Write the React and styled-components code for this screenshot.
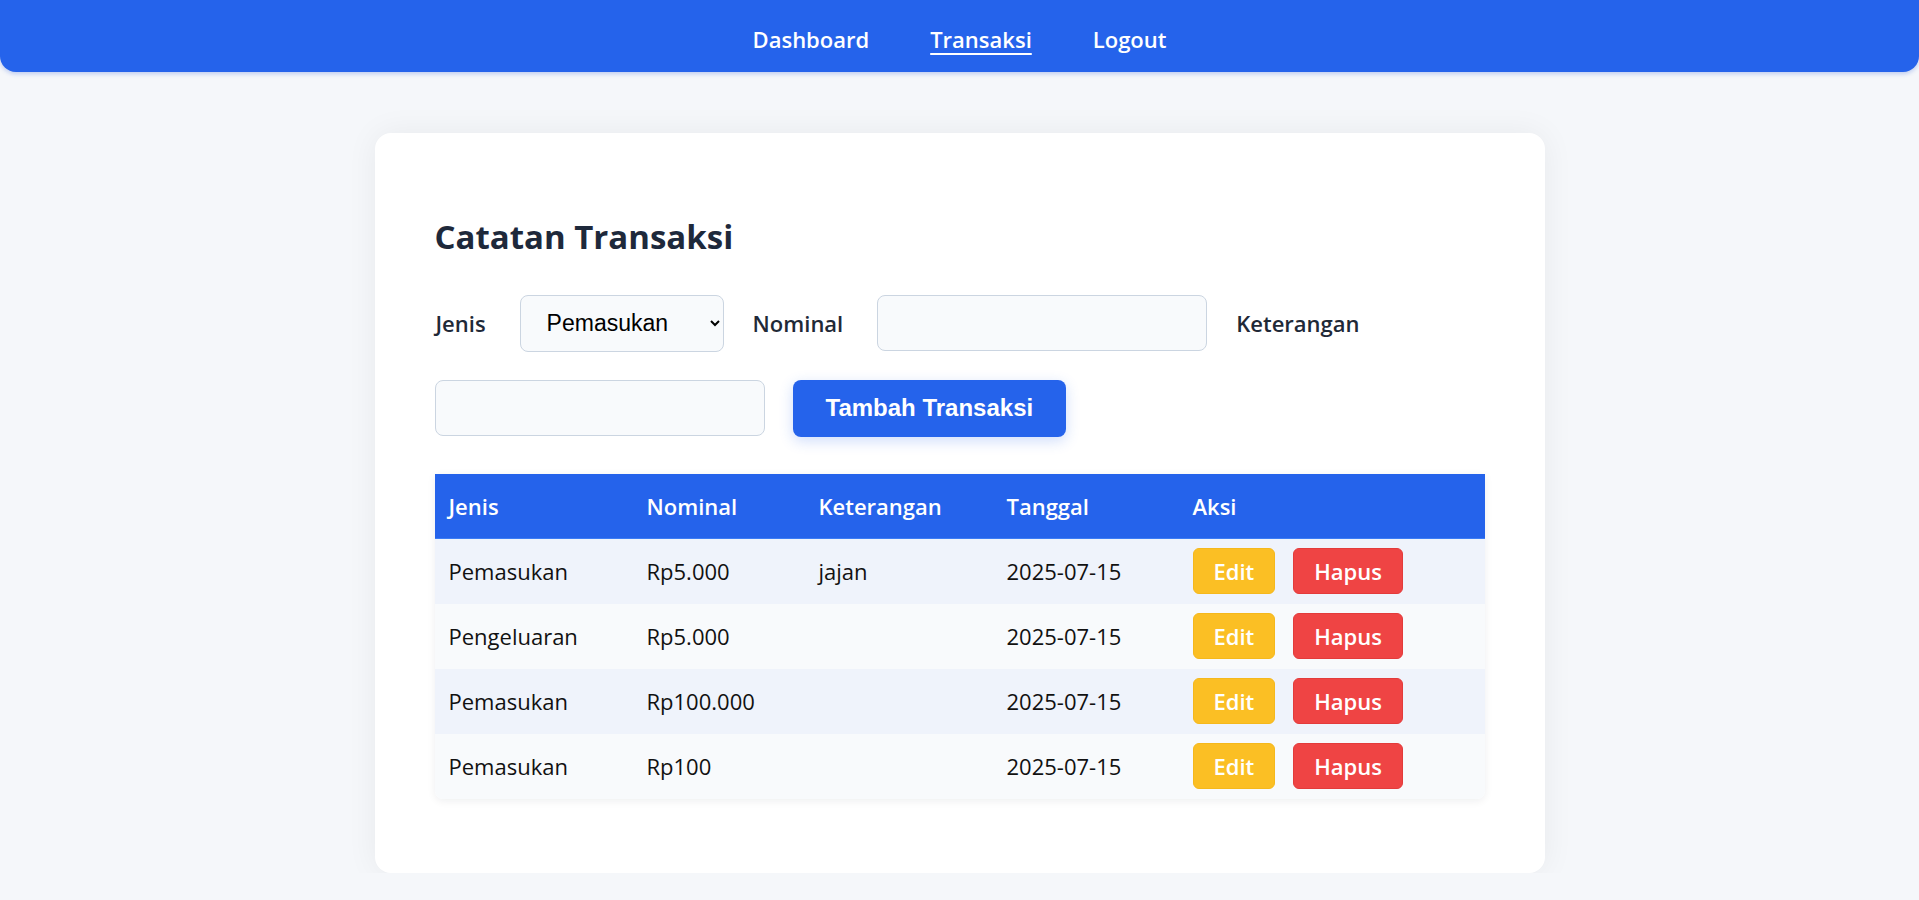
import React from 'react';
import styled, { createGlobalStyle } from 'styled-components';

const GlobalStyle = createGlobalStyle`
    * {
        box-sizing: border-box;
    }
    body {
        margin: 0;
        background: #f5f7fa;
        font-family: "Open Sans", "Noto Sans", sans-serif;
        color: #111827;
    }
`;

const Navbar = styled.nav`
    height: 72px;
    background: #2563eb;
    border-radius: 0 0 16px 16px;
    box-shadow: 0 2px 4px rgba(29, 78, 216, 0.25);
    display: flex;
    justify-content: center;
    align-items: center;
    gap: 61px;
    padding-top: 6px;
`;

const NavLink = styled.a`
    color: #ffffff;
    font-size: 22px;
    font-weight: 600;
    text-decoration: ${props => (props.active ? 'underline' : 'none')};
    text-underline-offset: 5px;
    text-decoration-thickness: 2px;
    cursor: pointer;
`;

const Card = styled.main`
    width: 1170px;
    margin: 61px auto 0;
    background: #ffffff;
    border-radius: 16px;
    padding: 60px 60px 60px;
    box-shadow: 0 0 32px rgba(15, 23, 42, 0.06);
`;

const Title = styled.h2`
    margin: 24px 0 38px;
    font-size: 33px;
    line-height: 1.2;
    font-weight: 700;
    color: #1e293b;
`;

const Form = styled.form`
    display: flex;
    flex-wrap: wrap;
    align-items: center;
    gap: 28px;
    margin-bottom: 37px;
`;

const Label = styled.label`
    font-size: 22px;
    font-weight: 600;
    color: #1f2937;
    margin-left: 1px;
    margin-right: 6px;
`;

const Select = styled.select`
    width: 204px;
    height: 57px;
    padding: 0 14px 0 22px;
    font-family: "Liberation Sans", Arial, sans-serif;
    font-size: 23px;
    color: #000000;
    background: #f8fafc;
    border: 1px solid #cbd5e1;
    border-radius: 8px;
`;

const Input = styled.input`
    width: 330px;
    height: 56px;
    padding: 0 16px;
    font-size: 22px;
    background: #f8fafc;
    border: 1px solid #cbd5e1;
    border-radius: 8px;
`;

const SubmitButton = styled.button`
    height: 57px;
    padding: 0 33px;
    background: #2563eb;
    color: #ffffff;
    font-family: "Liberation Sans", Arial, sans-serif;
    font-size: 24px;
    font-weight: 700;
    border: none;
    border-radius: 8px;
    box-shadow: 0 4px 14px rgba(37, 99, 235, 0.22);
    cursor: pointer;
`;

const TableWrap = styled.div`
    border-radius: 0 0 8px 8px;
    overflow: hidden;
    box-shadow: 0 2px 8px rgba(15, 23, 42, 0.07);
    margin-bottom: 14px;
`;

const Table = styled.table`
    width: 100%;
    border-collapse: collapse;
    table-layout: fixed;
`;

const Th = styled.th`
    width: ${props => props.w}px;
    height: 65px;
    padding: 0 14px;
    text-align: left;
    font-size: 22px;
    font-weight: 600;
    color: #ffffff;
    background: #2563eb;
    border-bottom: 1px solid #3b7cf5;
`;

const Row = styled.tr`
    background: ${props => (props.odd ? '#eff3fb' : '#f8fafc')};
`;

const Td = styled.td`
    height: 65px;
    padding: 0 14px;
    font-size: 22px;
    color: #111111;
`;

const Actions = styled.div`
    display: flex;
    gap: 18px;
`;

const ActionButton = styled.button`
    height: 46px;
    padding: 0 20px;
    font-family: "Open Sans", "Noto Sans", sans-serif;
    font-size: 22px;
    font-weight: 600;
    color: #ffffff;
    background: ${props => props.bg};
    border: 1px solid ${props => props.edge};
    border-radius: 6px;
    cursor: pointer;
`;

const transaksi = [
    { jenis: 'Pemasukan', nominal: 'Rp5.000', ket: 'jajan', tanggal: '2025-07-15' },
    { jenis: 'Pengeluaran', nominal: 'Rp5.000', ket: '', tanggal: '2025-07-15' },
    { jenis: 'Pemasukan', nominal: 'Rp100.000', ket: '', tanggal: '2025-07-15' },
    { jenis: 'Pemasukan', nominal: 'Rp100', ket: '', tanggal: '2025-07-15' },
];

function App() {
    return (
        <>
            <GlobalStyle />
            <Navbar>
                <NavLink>Dashboard</NavLink>
                <NavLink active>Transaksi</NavLink>
                <NavLink>Logout</NavLink>
            </Navbar>
            <Card>
                <Title>Catatan Transaksi</Title>
                <Form onSubmit={e => e.preventDefault()}>
                    <Label>Jenis</Label>
                    <Select defaultValue="pemasukan">
                        <option value="pemasukan">Pemasukan</option>
                        <option value="pengeluaran">Pengeluaran</option>
                    </Select>
                    <Label>Nominal</Label>
                    <Input type="number" />
                    <Label>Keterangan</Label>
                    <Input type="text" />
                    <SubmitButton type="submit">Tambah Transaksi</SubmitButton>
                </Form>
                <TableWrap>
                    <Table>
                        <thead>
                            <tr>
                                <Th w={198}>Jenis</Th>
                                <Th w={172}>Nominal</Th>
                                <Th w={188}>Keterangan</Th>
                                <Th w={186}>Tanggal</Th>
                                <Th w={306}>Aksi</Th>
                            </tr>
                        </thead>
                        <tbody>
                            {transaksi.map((t, i) => (
                                <Row key={i} odd={i % 2 === 0}>
                                    <Td>{t.jenis}</Td>
                                    <Td>{t.nominal}</Td>
                                    <Td>{t.ket}</Td>
                                    <Td>{t.tanggal}</Td>
                                    <Td>
                                        <Actions>
                                            <ActionButton bg="#fbbf24" edge="#f5b81c">Edit</ActionButton>
                                            <ActionButton bg="#ef4444" edge="#e33b3b">Hapus</ActionButton>
                                        </Actions>
                                    </Td>
                                </Row>
                            ))}
                        </tbody>
                    </Table>
                </TableWrap>
            </Card>
        </>
    );
}

export default App;
